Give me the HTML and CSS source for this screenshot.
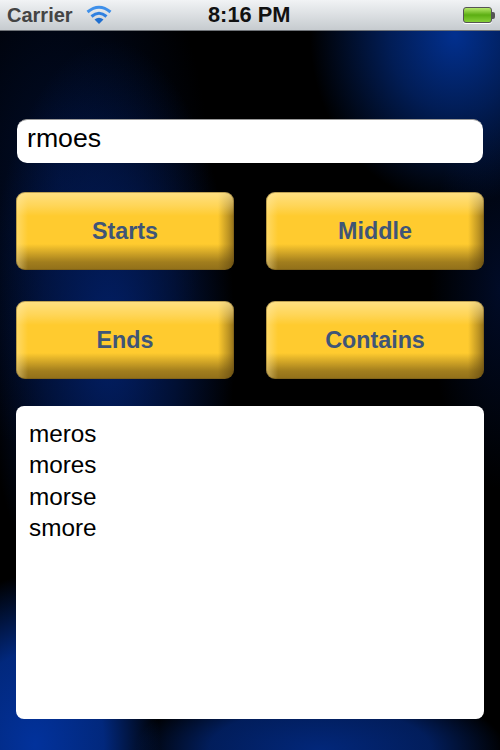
FILE: index.html
```html
<!DOCTYPE html>
<html lang="en">
<head>
    <meta charset="UTF-8">
    <meta name="viewport" content="width=device-width, initial-scale=1.0">
    <title>Anagrams</title>
    <link rel="stylesheet" href="styles.css">
</head>
<body>
    <div class="screen">
        <div class="status-bar">
            <div class="status-left">
                <span class="carrier">Carrier</span>
                <svg class="wifi" width="28" height="20" viewBox="0 0 28 20">
                    <path d="M14 19 L9.500 14.500 Q14 11 18.500 14.500 Z" fill="#1f6fd0"/>
                    <path d="M6.500 11.500 Q14 5 21.500 11.500" fill="none" stroke="#2f80e0" stroke-width="3"/>
                    <path d="M2.500 7 Q14 -2.500 25.500 7" fill="none" stroke="#3f90ea" stroke-width="3"/>
                </svg>
            </div>
            <span class="clock">8:16 PM</span>
            <div class="battery">
                <div class="battery-body"></div>
                <div class="battery-tip"></div>
            </div>
        </div>
        <div class="content">
            <div class="word-input">rmoes</div>
            <div class="buttons">
                <button class="btn">Starts</button>
                <button class="btn">Middle</button>
                <button class="btn">Ends</button>
                <button class="btn">Contains</button>
            </div>
            <div class="results">
                <div>meros</div>
                <div>mores</div>
                <div>morse</div>
                <div>smore</div>
            </div>
        </div>
    </div>
</body>
</html>
```
FILE: styles.css
```css
html, body {
    margin: 0;
    height: 100%;
}

.screen {
    width: 500px;
    height: 750px;
    overflow: hidden;
    display: flex;
    flex-direction: column;
    font-family: "Liberation Sans", Arial, sans-serif;
    background-color: #000;
    background-image:
        radial-gradient(ellipse 145px 170px at 455px 35px, #02308f 0%, rgba(2, 48, 143, 0.6) 45%, rgba(0, 0, 0, 0) 100%),
        radial-gradient(ellipse 125px 300px at 110px 340px, #021f66 0%, rgba(2, 31, 102, 0.5) 55%, rgba(0, 0, 0, 0) 100%),
        radial-gradient(ellipse 150px 280px at 60px 180px, rgba(1, 18, 60, 0.7) 0%, rgba(0, 0, 0, 0) 100%),
        radial-gradient(ellipse 125px 170px at 35px 745px, #02329c 0%, rgba(2, 50, 156, 0.8) 55%, rgba(0, 0, 0, 0) 100%),
        radial-gradient(ellipse 185px 70px at 320px 750px, #02277a 0%, rgba(2, 39, 122, 0.75) 60%, rgba(0, 0, 0, 0) 100%),
        radial-gradient(ellipse 70px 200px at 500px 290px, rgba(1, 16, 55, 0.7) 0%, rgba(0, 0, 0, 0) 100%);
}

.status-bar {
    height: 31px;
    flex: none;
    box-sizing: border-box;
    display: flex;
    align-items: center;
    justify-content: space-between;
    padding: 0 5px 0 7px;
    background: linear-gradient(#f1f3f5, #c6cbcf);
    border-bottom: 1px solid #6f7378;
    position: relative;
}

.status-left {
    display: flex;
    align-items: center;
    gap: 12px;
}

.carrier {
    font-size: 20px;
    font-weight: bold;
    color: #444;
}

.clock {
    font-size: 21.800px;
    font-weight: bold;
    color: #111;
    position: absolute;
    left: 208px;
}

.battery {
    display: flex;
    align-items: center;
}

.battery-body {
    width: 27px;
    height: 14px;
    border: 1px solid #555;
    border-radius: 3px;
    background: linear-gradient(#b5e86a, #5cae12 50%, #86cf38);
    box-shadow: 0 1px 0 #fff;
}

.battery-tip {
    width: 3px;
    height: 7px;
    background: #555;
    border-radius: 0 2px 2px 0;
}

.content {
    flex: 1;
    display: flex;
    flex-direction: column;
    padding: 88px 16px 31px;
    min-height: 0;
}

.word-input {
    height: 44px;
    box-sizing: border-box;
    margin: 0 1px 29px 1px;
    padding: 2px 10px 0;
    background: #fff;
    border-radius: 10px;
    border-top: 1px solid #999;
    font-size: 26.700px;
    line-height: 32px;
    color: #000;
}

.buttons {
    display: grid;
    grid-template-columns: 218px 218px;
    justify-content: space-between;
    row-gap: 31px;
    margin-bottom: 27px;
}

.btn {
    height: 78px;
    padding: 0;
    border: none;
    border-radius: 9px;
    font-family: inherit;
    font-size: 23.300px;
    font-weight: bold;
    color: #3f5577;
    background-color: #ffcb2f;
    background-image:
        linear-gradient(to bottom, rgba(255, 232, 160, 0.75) 0, rgba(255, 232, 160, 0.35) 14px, rgba(255, 232, 160, 0) 24px),
        linear-gradient(to right, rgba(255, 232, 160, 0.5) 0, rgba(255, 232, 160, 0) 12px),
        linear-gradient(to top, rgba(85, 62, 15, 0.65) 0, rgba(85, 62, 15, 0.55) 8px, rgba(85, 62, 15, 0) 26px),
        linear-gradient(to left, rgba(85, 62, 15, 0.65) 0, rgba(85, 62, 15, 0.4) 5px, rgba(85, 62, 15, 0) 16px);
    box-shadow: inset 0 0 0 1px rgba(110, 85, 25, 0.45);
}

.results {
    flex: 1;
    background: #fff;
    border-radius: 8px;
    padding: 12px 13px;
    font-size: 24.300px;
    line-height: 31.300px;
    color: #000;
}
```
